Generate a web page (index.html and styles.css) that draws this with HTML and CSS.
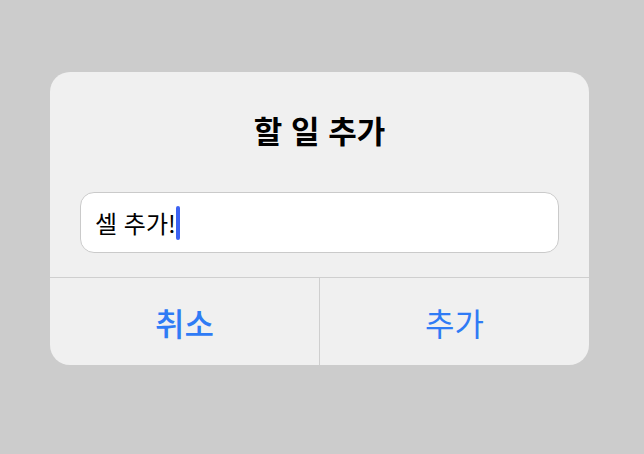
FILE: index.html
```html
<!DOCTYPE html>
<html lang="ko">
  <head>
    <meta charset="UTF-8" />
    <title>할 일 추가</title>
    <link rel="stylesheet" href="styles.css">
  </head>
  <body>
    <div class="alert">
      <h1 class="alert-title">할 일 추가</h1>
      <div class="field">
        <span class="field-text">셀 추가!</span><span class="caret"></span>
      </div>
      <div class="actions">
        <button class="action action-cancel">취소</button>
        <button class="action">추가</button>
      </div>
    </div>
  </body>
</html>
```

FILE: styles.css
```css
body {
  margin: 0;
  padding: 72px 0 0 50px;
  background: #cccccc;
  font-family: "Noto Sans CJK KR", "Noto Sans", sans-serif;
  color: #000;
}

.alert {
  width: 539px;
  height: 293px;
  background: #f0f0f0;
  border-radius: 20px;
  display: flex;
  flex-direction: column;
  overflow: hidden;
}

.alert-title {
  margin: 0;
  padding-top: 36px;
  height: 82px;
  box-sizing: border-box;
  text-align: center;
  font-size: 31px;
  font-weight: bold;
  line-height: 44px;
}

.field {
  margin: 38px 30px 0;
  height: 61px;
  box-sizing: border-box;
  background: #fff;
  border: 1px solid #cacaca;
  border-radius: 14px;
  padding: 0 14px;
  display: flex;
  align-items: center;
}

.field-text {
  font-size: 24px;
  line-height: 32px;
}

.caret {
  width: 4px;
  height: 34px;
  margin-left: 0;
  border-radius: 2px;
  background: #3d63f2;
}

.actions {
  margin-top: 24px;
  flex: 1;
  display: flex;
  border-top: 1px solid #cfcfcf;
}

.action {
  flex: 1;
  border: none;
  background: none;
  padding: 0;
  font-family: inherit;
  font-size: 32px;
  color: #2f7bf5;
}

.action + .action {
  border-left: 1px solid #cfcfcf;
}

.action-cancel {
  font-weight: 500;
}
```
